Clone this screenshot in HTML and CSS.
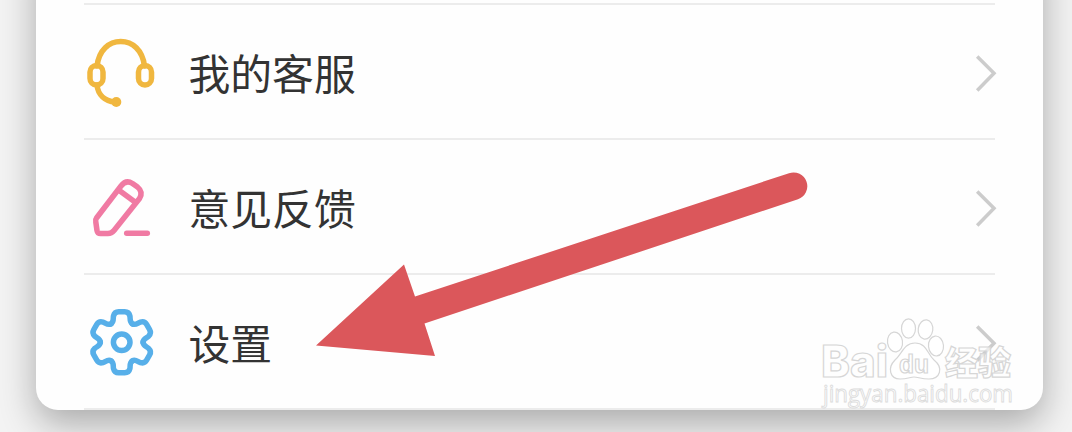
FILE: index.html
```
<!DOCTYPE html>
<html lang="zh-CN">
<head>
  <meta charset="UTF-8" />
  <meta name="viewport" content="width=device-width, initial-scale=1.0" />
  <title>设置</title>
  <link rel="stylesheet" href="styles.css">
</head>
<body>
  <div class="card">
    <div class="row">
      <svg class="icon headset" viewBox="0 0 76 77">
        <path d="M13 33 C15 17 25 8.500 36.700 8.500 C48.500 8.500 58.500 17 60.500 33" />
        <rect x="6" y="32.500" width="13" height="19.500" rx="6.500" />
        <rect x="54.500" y="32.500" width="13" height="19.500" rx="6.500" />
        <path d="M13 52 C14 62 21 68 31 69" />
        <circle class="dot" cx="32.300" cy="69" r="5" />
      </svg>
      <span class="label">我的客服</span>
      <svg class="chevron" viewBox="0 0 22 41"><path d="M2.200 5.500 L19 22.300 L2.200 39.500" /></svg>
    </div>

    <div class="row">
      <svg class="icon pencil" viewBox="0 0 76 77">
        <path d="M12.500 50 L37 18 Q42 11.500 48.500 15.500 L53.500 19 Q59.500 24 55.500 30.500 L30 62.500 Q27.500 65.500 24 65.500 H16.500 Q13.500 65.500 13 62.500 L11.800 54 Q11.300 51.500 12.500 50 Z" />
        <path d="M36 23 L51 34" />
        <path d="M42.700 65.200 H63.300" />
      </svg>
      <span class="label">意见反馈</span>
      <svg class="chevron" viewBox="0 0 22 41"><path d="M2.200 5.500 L19 22.300 L2.200 39.500" /></svg>
    </div>

    <div class="row">
      <svg class="icon gear" viewBox="0 0 76 77">
        <g transform="translate(37.700 39.300)">
          <path id="tooth" d="M-10.700 -18.500 C-7.500 -20.300 -8.800 -24 -8.200 -26.300 C-7.500 -29.200 -5.500 -30.500 -3 -30.500 H3 C5.500 -30.500 7.500 -29.200 8.200 -26.300 C8.800 -24 7.500 -20.300 10.700 -18.500" />
          <use href="#tooth" transform="rotate(60)" />
          <use href="#tooth" transform="rotate(120)" />
          <use href="#tooth" transform="rotate(180)" />
          <use href="#tooth" transform="rotate(240)" />
          <use href="#tooth" transform="rotate(300)" />
          <circle r="8.300" />
        </g>
      </svg>
      <span class="label">设置</span>
      <svg class="chevron" viewBox="0 0 22 41"><path d="M2.200 5.500 L19 22.300 L2.200 39.500" /></svg>
    </div>
  </div>

  <!-- Arrow pointing at the settings row -->
  <svg class="arrow" viewBox="0 0 492 184">
    <path d="M0 173.500 L88 92.500 L99 124.500 L473 1.200 A13.800 13.800 0 0 1 482 27.300 L108.500 151.500 L119 184 Z" />
  </svg>

  <!-- Watermark -->
  <svg class="watermark" viewBox="0 0 200 94">
    <text class="brand" x="1" y="61" textLength="67" lengthAdjust="spacingAndGlyphs">Bai</text>
    <ellipse cx="75" cy="26" rx="7.500" ry="10" transform="rotate(-8 75 26)" />
    <ellipse cx="88.500" cy="12.500" rx="7" ry="9.700" />
    <ellipse cx="105.500" cy="13.500" rx="7.300" ry="9.700" transform="rotate(8 105.500 13.500)" />
    <ellipse cx="116" cy="30" rx="7.500" ry="10" transform="rotate(-5 116 30)" />
    <path d="M95 27 C107 27 107 38 114 44 C124 52 120 63 109 63 C101 63 98 61 94 61 C90 61 88 63 80 63 C70 63 67 52 75 44 C82 38 84 27 95 27 Z" />
    <text class="du" x="79" y="57" textLength="30" lengthAdjust="spacingAndGlyphs">du</text>
    <text class="cn" x="125" y="59" textLength="66">经验</text>
    <text class="site" x="3" y="86" textLength="190" lengthAdjust="spacingAndGlyphs">jingyan.baidu.com</text>
  </svg>
</body>
</html>
```

FILE: styles.css
```
body {
  position: relative;
  display: flow-root;
  height: 432px;
  margin: 0;
  overflow: hidden;
  background-color: #f3f3f3;
  font-family: "Noto Sans CJK SC", sans-serif;
}
.card {
  box-sizing: border-box;
  height: 470px;
  margin: -60px 29px 0 36px;
  padding: 63px 48px 0;
  background-color: #fefefe;
  border-radius: 22px;
  box-shadow: 0 14px 36px rgba(0, 0, 0, 0.3);
}
.row {
  box-sizing: border-box;
  display: flex;
  align-items: center;
  height: 135px;
  border-bottom: 2px solid #ececec;
}
.row:first-child {
  height: 137px;
  border-top: 2px solid #ececec;
}
.icon {
  width: 76px;
  height: 77px;
  fill: none;
  stroke-width: 5.5;
  stroke-linecap: round;
  stroke-linejoin: round;
}
.headset {
  stroke: #f0b73f;
}
.headset .dot {
  fill: #f0b73f;
  stroke: none;
}
.pencil {
  stroke: #f07aa3;
}
.gear {
  stroke: #57afe9;
}
.label {
  flex: 1;
  margin-left: 28.5px;
  font-size: 41.8px;
  line-height: 60px;
  color: #333;
}
.chevron {
  width: 22px;
  height: 41px;
  margin-right: -2px;
  fill: none;
  stroke: #ccc;
  stroke-width: 3.5;
}
.arrow {
  position: absolute;
  left: 316px;
  top: 172px;
  width: 492px;
  height: 184px;
  fill: #db575b;
}
.watermark {
  position: absolute;
  left: 820px;
  top: 316px;
  width: 200px;
  height: 94px;
  fill: rgba(255, 255, 255, 0.65);
  stroke: #d6d6d6;
  stroke-width: 1.2;
}
.brand {
  font: 800 44px Inter, "Liberation Sans", sans-serif;
}
.du {
  font: bold 25px "Liberation Sans", sans-serif;
}
.cn {
  font: 900 33px "Noto Sans CJK SC", sans-serif;
}
.site {
  font: 23px "Open Sans", sans-serif;
  stroke: #dcdcdc;
  stroke-width: 0.9;
}
```
